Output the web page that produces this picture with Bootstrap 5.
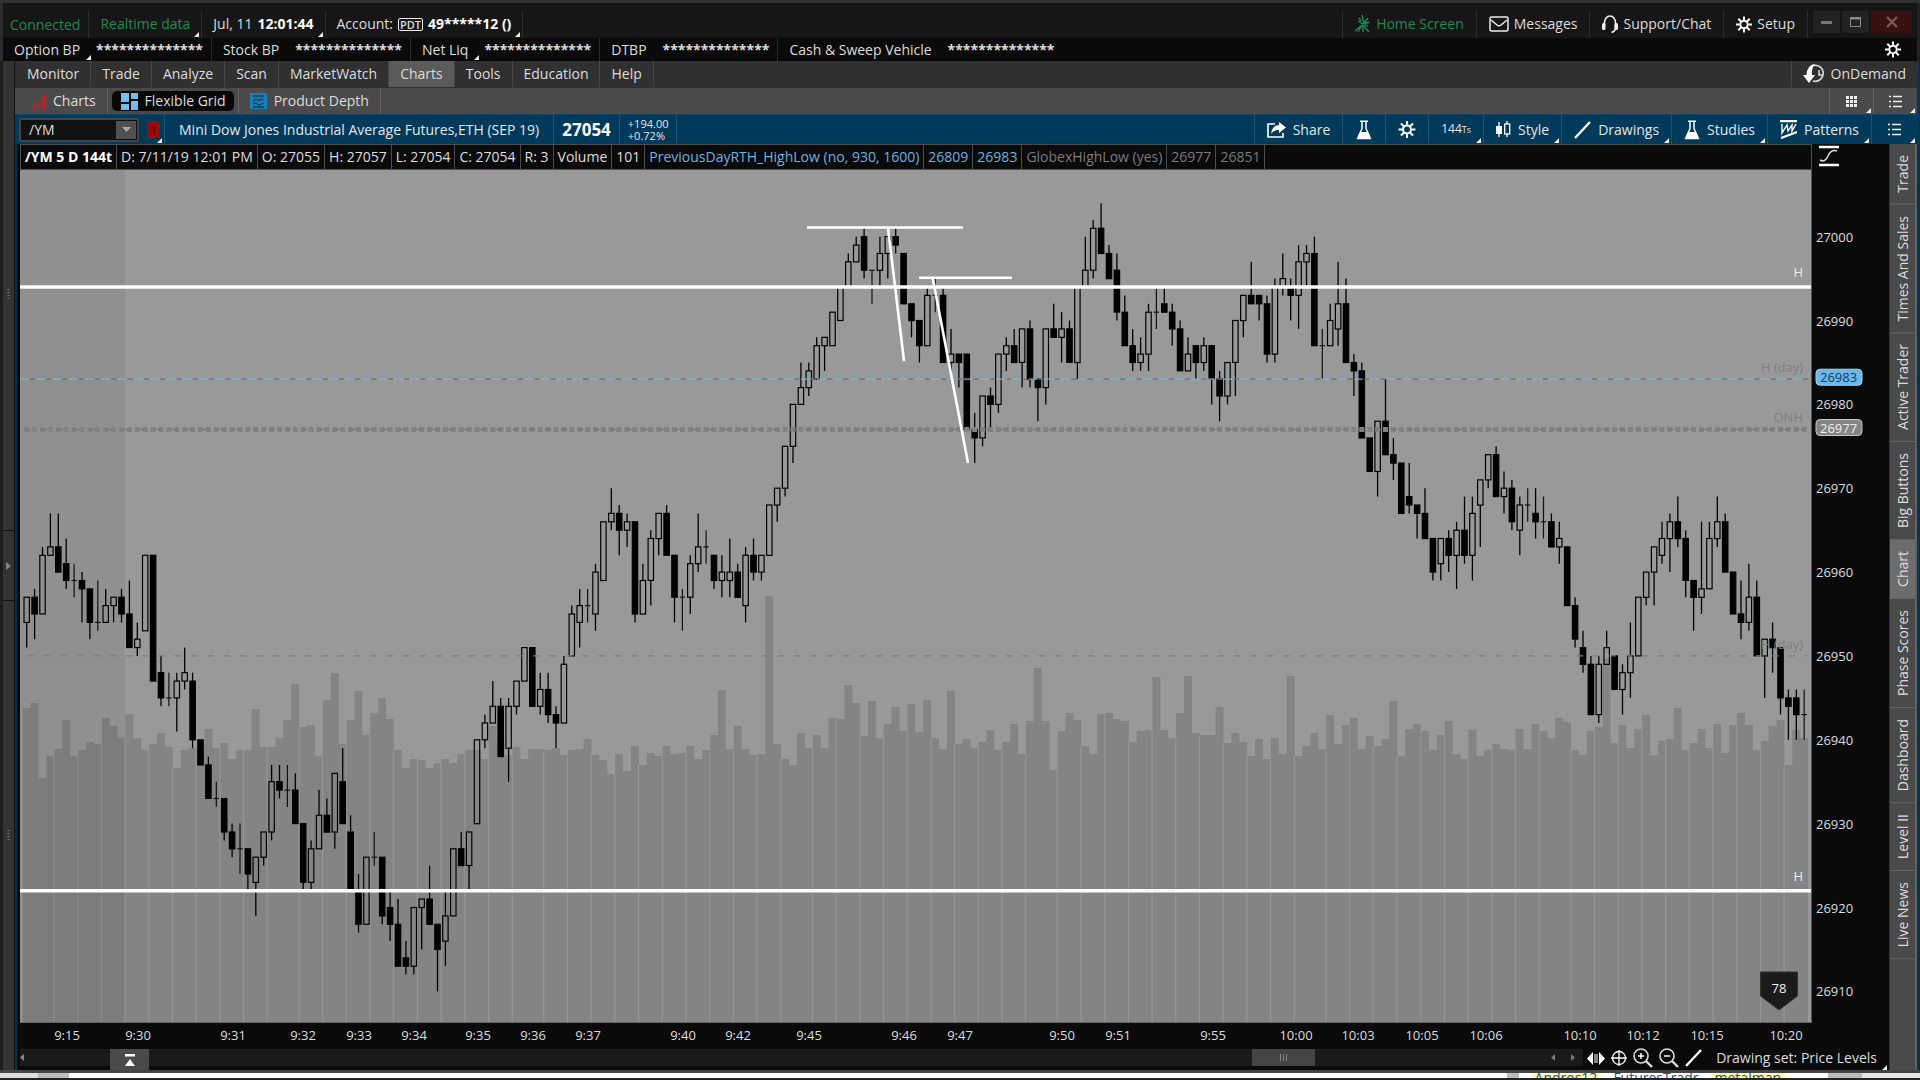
<!DOCTYPE html>
<html lang="en">
<head>
<meta charset="utf-8">
<meta name="viewport" content="width=device-width, initial-scale=1">
<title>Charts - Flexible Grid</title>
<link href="https://cdn.jsdelivr.net/npm/bootstrap@5.3.0/dist/css/bootstrap.min.css" rel="stylesheet">
<style>
body{font-family:"Open Sans","Noto Sans",sans-serif;font-size:14px;line-height:16px;color:#ddd;background:#0a0a0a;overflow:hidden}
a,button{color:inherit;text-decoration:none;font:inherit}
button{background:none;border:0;padding:0}
svg{display:block;flex:none}
.frame-top{height:3px;background:#333}
.title-row{height:35px;background:#161616;border-left:3px solid #2c2c2c;border-right:3px solid #222;padding-top:8px}
.bal-row{height:23px;background:#0a0a0a;border-left:3px solid #2c2c2c;border-right:3px solid #222}
.seg{display:flex;align-items:center;gap:7px;padding:0 11px;border-right:1px solid #2b2b2b;position:relative;white-space:nowrap;height:100%}
.title-row .seg{padding-bottom:1px;gap:5px}
.title-row .seg.first{padding:0 8px 0 7px}
.title-row button.seg{padding-left:12px;padding-right:12px}
.bal-row .seg{gap:5px;padding-right:8px}
.grn{color:#1f8a55}
.corner::after{content:"";position:absolute;right:2px;bottom:1px;border-style:solid;border-width:0 0 5px 5px;border-color:transparent transparent #eee transparent}
.bal-name{position:relative;height:100%;display:flex;align-items:center;padding-right:11px}
.bal-name.corner::after{right:0}
.pdt{border:1px solid #eee;border-radius:2px;font-size:11px;line-height:11px;padding:0 1px;font-weight:600}
.stars{font-weight:700;font-size:14px}
.wins{gap:2px;padding:0 5px}
.win{width:27px;height:22px;background:#222;display:flex;align-items:center;justify-content:center}
.win-x{width:41px;background:#3a1112}
.fill-pane,.shrink-pane{min-width:0;min-height:0}
.rail{width:15px;background:#333;border-left:3px solid #1c1c1c;border-right:1px solid #111}
.rail-end{flex:47 0 0}
.rail-mid{flex:7 0 0;border-top:1px solid #111;border-bottom:1px solid #111}
.menu-row{height:27px;background:#303030;padding-left:1px}
.menu-row .seg{border-color:#464646;height:26px}
.menu-row .on{background:#5a5a5a}
.tab-row{height:26px;background:#4a4a4a}
.tab-row .seg{border-color:#626262}
.pill-on{background:#070707;border-radius:5px;height:20px;display:flex;align-items:center;gap:7px;padding:0 8px 0 9px}
.blue-row{height:30px;background:#003a5a;border-top:1px solid #0b4568;color:#e6e6e6}
.blue-row .seg{border-color:#1c5272;padding:0 12px}
.blue-row .seg.sym-seg{padding:0 4px;gap:0}
.blue-row .seg.name-seg{padding:0 14px}
.blue-row .seg.tight{padding:0 8px}
.sym{width:120px;height:24px;background:#111;border:2px solid #444;border-radius:2px}
.sym input{width:94px;background:transparent;border:0;color:#ddd;padding:0 8px;outline:0;font:inherit}
.sym button{width:22px;background:#505050;margin:1px;display:flex;align-items:center;justify-content:center}
.red1{width:13px;height:17px;background:#9a0c0c;color:#3c0000;border-radius:3px;font-size:13px;display:flex;justify-content:center;align-items:center}
.last{font-size:17px;font-weight:700;color:#fff}
.chg{font-size:11px;line-height:12px}
.ticks{font-size:12px}
.ticks small{font-size:9px}
.info-row{height:26px;border:1px solid #4d4d4d;background:#0a0a0a;margin-left:3px}
.info-row span{border-right:1px solid #4d4d4d;padding:0 4px;display:flex;align-items:center;white-space:nowrap}
.cy{color:#6cb2e2}.gy{color:#7b7b7b}
.work{border-left:2px solid #00324e;background:#0a0a0a}
.plot{background:#999;margin-left:3px;border-right:1px solid #555;border-bottom:1px solid #666}
.axis-y{width:77px}
.axis-x{height:26px}
.axis-y svg,.axis-x svg,.plot svg{position:absolute;left:0;top:0;width:100%;height:100%;overflow:hidden}
.plot text{font-size:13px;fill:#808080}
.axis-y text,.axis-x text{font-size:13px;fill:#ddd}
.side{width:28px;background:#4a4a4a;border-left:1px solid #333;border-right:2px solid #626262}
.side button{writing-mode:vertical-rl;transform:rotate(180deg);padding:11px 0;width:100%;line-height:25px;border-top:1px solid #666;color:#ddd}
.side .on{background:#6c6c6c}
.edge{width:3px;background:#222;border-left:2px solid #003a5a}
.scroll-row{height:21px}
.track{height:17px;background:#1a1a1a;margin-left:3px}
.track-end{width:268px}
.knob{width:39px;height:22px;background:#4a4a4a;margin-left:86px}
.thumb{width:63px;height:17px;background:#444}
.tools{height:18px;gap:6px;padding:0 12px 0 4px}
.tools.corner::after{bottom:-3px}
.frame-bot{height:3px;background:#444}
.under{height:7px;overflow:hidden;background:linear-gradient(90deg,#ddd 2%,#bbb 2% 3.6%,#fff 3.6% 78.5%,#bbb 78.5% 79.1%,#fff 79.1% 95.2%,#bbb 95.2% 97%,#e4e4e4 97%);color:#1b4f8f;border-bottom:2px solid #222;line-height:10px;padding-right:135px}
.under mark{padding:0 4px;background:#ffffae;color:inherit}
</style>
</head>
<body class="vh-100 d-flex flex-column">
<svg width="0" height="0" class="position-absolute">
<defs>
<symbol id="gear" viewBox="0 0 18 18"><g stroke="#fff" stroke-width="2.2" fill="none"><circle cx="9" cy="9" r="4.2"/><path d="M9 0v4M9 14v4M0 9h4M14 9h4M2.6 2.6l3 3M12.4 12.4l3 3M15.4 2.6l-3 3M5.6 12.4l-3 3"/></g></symbol>
<symbol id="flask" viewBox="0 0 16 20"><path d="M4 1.200h8M6 1.500v7L1.600 18.600h12.800L10 8.500v-7" fill="none" stroke="#fff" stroke-width="1.500"/><path d="M4.500 12h7l3 6.800h-13z" fill="#fff"/></symbol>
<symbol id="list" viewBox="0 0 13 13"><path d="M0 1.500h2M4 1.500h9M0 6.500h2M4 6.500h9M0 11.500h2M4 11.500h9" stroke="#eee" stroke-width="1.4"/></symbol>
<symbol id="slash" viewBox="0 0 17 18"><path d="M1 17L16 1" stroke="#fff" stroke-width="2.4"/></symbol>
</defs>
</svg>

<div class="frame-top flex-shrink-0"></div>
<header class="title-row d-flex flex-shrink-0">
  <div class="seg first grn">Connected</div>
  <div class="seg corner grn">Realtime data</div>
  <div class="seg corner"><span>Jul, 11</span><b class="text-white">12:01:44</b></div>
  <div class="seg corner"><span>Account:</span><span class="pdt">PDT</span><b class="text-white">49*****12 ()</b></div>
  <div class="flex-grow-1"></div>
  <div class="seg p-0"></div>
  <button class="seg grn"><svg width="16" height="18" viewBox="0 0 16 18"><path d="M9 9L7 0M8 9l5-6M9 9l5-2M9 11l5 6M10 10l3 1M8 9L3 6M8 9v8M7 10l-4 7M6 11l-6 5M6 6L4 3" stroke="#1f8a55" stroke-width="1.400" fill="none"/></svg>Home Screen</button>
  <button class="seg"><svg width="20" height="16" viewBox="0 0 20 16"><rect x="1" y="1" width="18" height="14" rx="1.500" fill="none" stroke="#eee" stroke-width="1.500"/><path d="M2 4l6 5q2 1.500 4 0l6-5" fill="none" stroke="#eee" stroke-width="1.500"/></svg>Messages</button>
  <button class="seg"><svg width="16" height="19" viewBox="0 0 16 19"><path d="M2.500 11V7.500a5.500 6.500 0 0 1 11 0V12q0 4.500-4 5.500" fill="none" stroke="#eee" stroke-width="1.600"/><rect x="0" y="8" width="3.500" height="7" rx="1.500" fill="#eee"/><rect x="12.500" y="8" width="3.500" height="7" rx="1.500" fill="#eee"/></svg>Support/Chat</button>
  <button class="seg"><svg width="16" height="17"><use href="#gear"/></svg>Setup</button>
  <div class="wins d-flex">
    <button class="win" aria-label="Minimize"><svg width="11" height="3"><rect width="11" height="3" fill="#777"/></svg></button>
    <button class="win" aria-label="Maximize"><svg width="11" height="10"><rect x=".5" y=".5" width="10" height="9" fill="none" stroke="#888"/><path d="M0 1.500h11" stroke="#888" stroke-width="2"/></svg></button>
    <button class="win win-x" aria-label="Close"><svg width="12" height="12"><path d="M1 1l10 10M11 1L1 11" stroke="#7e5555" stroke-width="2.400"/></svg></button>
  </div>
</header>
<div class="bal-row d-flex flex-shrink-0">
  <div class="seg"><span class="bal-name corner">Option BP</span><span class="stars">**************</span></div>
  <div class="seg"><span class="bal-name">Stock BP</span><span class="stars">**************</span></div>
  <div class="seg"><span class="bal-name corner">Net Liq</span><span class="stars">**************</span></div>
  <div class="seg"><span class="bal-name">DTBP</span><span class="stars">**************</span></div>
  <div class="seg border-0"><span class="bal-name">Cash &amp; Sweep Vehicle</span><span class="stars">**************</span></div>
  <button class="ms-auto me-3 d-flex align-items-center" aria-label="Settings"><svg width="16" height="17"><use href="#gear"/></svg></button>
</div>

<div class="d-flex flex-grow-1 fill-pane">
  <aside class="rail d-flex flex-column flex-shrink-0">
    <div class="rail-end d-flex align-items-center justify-content-center"><svg width="3" height="12"><path d="M1.500 0v12" stroke="#777" stroke-width="2" stroke-dasharray="1 2"/></svg></div>
    <div class="rail-mid d-flex align-items-center justify-content-center"><svg width="5" height="8"><path d="M0 0l5 4-5 4z" fill="#888"/></svg></div>
    <div class="rail-end d-flex align-items-center justify-content-center"><svg width="3" height="12"><path d="M1.500 0v12" stroke="#777" stroke-width="2" stroke-dasharray="1 2"/></svg></div>
  </aside>
  <div class="d-flex flex-column flex-grow-1 fill-pane">
    <nav class="menu-row d-flex flex-shrink-0">
      <a class="seg" href="#">Monitor</a><a class="seg" href="#">Trade</a><a class="seg" href="#">Analyze</a><a class="seg" href="#">Scan</a><a class="seg" href="#">MarketWatch</a><a class="seg on" href="#">Charts</a><a class="seg" href="#">Tools</a><a class="seg" href="#">Education</a><a class="seg" href="#">Help</a>
      <div class="seg ms-auto p-0"></div>
      <button class="seg border-0 gap-1"><svg width="24" height="20" viewBox="0 0 24 20"><path d="M8 2.500a8 8 0 1 1 2 14.500" fill="none" stroke="#ddd" stroke-width="1.600"/><path d="M16 6v5h4" fill="none" stroke="#ddd" stroke-width="1.500"/><path d="M12 0Q4 1 3.500 11H0l6 8 6-8H9Q8 5 12 0z" fill="#fff"/></svg>OnDemand</button>
    </nav>
    <nav class="tab-row d-flex flex-shrink-0">
      <a class="seg" href="#"><svg width="20" height="17"><path d="M5.500 17v-3M9 17v-7M12.500 17V7M16 17V3M19 17V0" stroke="#b32424" stroke-width="2"/></svg>Charts</a>
      <a class="seg px-1" href="#"><span class="pill-on"><svg width="17" height="17" viewBox="0 0 17 17"><path d="M0 0h8v9H0zM0 11h8v6H0zM10 0h7v6h-7zM10 8h7v9h-7z" fill="#72bdf0"/></svg>Flexible Grid</span></a>
      <a class="seg" href="#"><svg width="17" height="16"><rect width="17" height="16" fill="#1a7fb8"/><path d="M3 3h11M3 8l3-2 3 2 2-2 3 1M3 11l3-1 3 2 5-2M3 14h11" stroke="#0d3f5e" stroke-width="1.300" fill="none"/></svg>Product Depth</a>
      <div class="seg ms-auto p-0"></div>
      <button class="seg corner px-3" aria-label="Grid layout"><svg width="11" height="11"><path d="M0 1.500h11M0 5.500h11M0 9.500h11" stroke="#eee" stroke-width="3" stroke-dasharray="3 1"/></svg></button>
      <button class="seg corner border-0" aria-label="List"><svg width="13" height="13" class="mx-1"><use href="#list"/></svg></button>
    </nav>
    <div class="blue-row d-flex flex-shrink-0">
      <div class="seg corner sym-seg"><div class="sym d-flex"><input aria-label="Symbol" value="/YM"><button aria-label="Symbols"><svg width="9" height="5"><path d="M0 0h9L4.500 5z" fill="#aaa"/></svg></button></div><span class="red1 ms-2">1</span></div>
      <div class="seg name-seg">Mini Dow Jones Industrial Average Futures,ETH (SEP 19)</div>
      <div class="seg tight last">27054</div>
      <div class="seg tight chg"><div><div>+194.00</div><div>+0.72%</div></div></div>
      <div class="seg tight ms-auto px-0"></div>
      <button class="seg"><svg width="19" height="16" viewBox="0 0 19 16"><path d="M8 2H1v13h15v-4" fill="none" stroke="#fff" stroke-width="1.600"/><path d="M12 0l7 5.500-7 5.500V8Q7 7.500 4 12 5 3.500 12 3z" fill="#fff"/></svg>Share</button>
      <button class="seg" aria-label="Studies quick"><svg width="18" height="20"><use href="#flask"/></svg></button>
      <button class="seg" aria-label="Chart settings"><svg width="18" height="17"><use href="#gear"/></svg></button>
      <button class="seg corner ticks"><span>144<small>Ts</small></span></button>
      <button class="seg corner"><svg width="15" height="17" viewBox="0 0 15 17"><path d="M3 1v15M11 0v3M11 13v3" stroke="#fff" stroke-width="1.300"/><rect x="0" y="5" width="6" height="8" fill="#fff"/><rect x="8.700" y="3" width="5" height="10" fill="none" stroke="#fff" stroke-width="1.300"/></svg>Style</button>
      <button class="seg corner"><svg width="17" height="18"><use href="#slash"/></svg>Drawings</button>
      <button class="seg corner"><svg width="16" height="20"><use href="#flask"/></svg>Studies</button>
      <button class="seg corner"><svg width="17" height="19" viewBox="0 0 17 19"><path d="M0 1.200h17M1 18L17 12" stroke="#fff" stroke-width="2.200"/><path d="M2 4v9l5-8 1 6 4-6v6l4-7" fill="none" stroke="#fff" stroke-width="1.400"/></svg>Patterns</button>
      <button class="seg corner border-0" aria-label="Chart list"><svg width="13" height="13" class="mx-1"><use href="#list"/></svg></button>
    </div>
    <div class="d-flex flex-grow-1 fill-pane">
      <main class="work d-flex flex-column flex-grow-1 fill-pane">
        <div class="d-flex flex-grow-1 fill-pane">
          <div class="d-flex flex-column flex-grow-1 fill-pane">
            <div class="info-row d-flex text-nowrap flex-shrink-0">
              <span class="fw-bold text-white">/YM 5 D 144t</span><span>D: 7/11/19 12:01 PM</span><span>O: 27055</span><span>H: 27057</span><span>L: 27054</span><span>C: 27054</span><span>R: 3</span><span>Volume</span><span>101</span><span class="cy">PreviousDayRTH_HighLow (no, 930, 1600)</span><span class="cy">26809</span><span class="cy">26983</span><span class="gy">GlobexHighLow (yes)</span><span class="gy">26977</span><span class="gy">26851</span>
            </div>
            <div class="plot position-relative flex-grow-1"><svg id="plot" role="img" aria-label="Candlestick chart of /YM"></svg></div>
          </div>
          <div class="axis-y position-relative flex-shrink-0"><svg id="axisY"></svg></div>
        </div>
        <div class="axis-x position-relative flex-shrink-0"><svg id="axisX"></svg></div>
        <div class="scroll-row d-flex flex-shrink-0">
          <div class="track d-flex flex-grow-1">
            <svg width="4" height="17"><path d="M4 5L0 8.500 4 12z" fill="#888"/></svg>
            <button class="knob d-flex align-items-center justify-content-center" aria-label="Expand panel"><svg width="10" height="12"><path d="M5 5l5 7H0z" fill="#fff"/><rect width="10" height="2.500" fill="#fff"/></svg></button>
            <div class="flex-grow-1"></div>
            <div class="thumb d-flex align-items-center justify-content-center"><svg width="7" height="7"><path d="M.5 0v7M3.500 0v7M6.500 0v7" stroke="#888"/></svg></div>
            <div class="track-end d-flex justify-content-end gap-3 pe-2"><svg width="4" height="17"><path d="M4 5L0 8.500 4 12z" fill="#777"/></svg><svg width="4" height="17"><path d="M0 5l4 3.500L0 12z" fill="#777"/></svg></div>
          </div>
          <div class="tools d-flex align-items-center position-relative corner text-nowrap">
            <svg width="18" height="13"><path d="M6 0v13L0 6.500zM12 0v13l6-6.500z" fill="#fff"/><path d="M8 2v9M10 2v9" stroke="#fff"/></svg>
            <svg width="16" height="18"><circle cx="8" cy="9" r="6.500" fill="none" stroke="#fff" stroke-width="1.300"/><path d="M8 1v16M0 9h16" stroke="#fff" stroke-width="1.300"/></svg>
            <svg width="20" height="20"><circle cx="8" cy="8" r="7" fill="none" stroke="#ddd" stroke-width="1.600"/><path d="M8 5v6M5 8h6" stroke="#fff" stroke-width="1.500"/><path d="M13 13l6 6" stroke="#ddd" stroke-width="2.400"/></svg>
            <svg width="20" height="20"><circle cx="8" cy="8" r="7" fill="none" stroke="#ddd" stroke-width="1.600"/><path d="M5 8h6" stroke="#fff" stroke-width="1.500"/><path d="M13 13l6 6" stroke="#ddd" stroke-width="2.400"/></svg>
            <svg width="17" height="18"><use href="#slash"/></svg>
            <button class="ms-2">Drawing set: Price Levels</button>
          </div>
        </div>
      </main>
      <aside class="side d-flex flex-column flex-shrink-0">
        <button>Trade</button><button>Times And Sales</button><button>Active Trader</button><button>Big Buttons</button><button class="on">Chart</button><button>Phase Scores</button><button>Dashboard</button><button>Level II</button><button>Live News</button>
      </aside>
    </div>
  </div>
  <div class="edge flex-shrink-0"></div>
</div>
<div class="frame-bot flex-shrink-0"></div>
<div class="under flex-shrink-0 d-flex justify-content-end gap-2"><mark>Andros12</mark><span class="px-1">FuturesTradr</span><mark>metalman</mark></div>

<script src="https://cdn.jsdelivr.net/npm/bootstrap@5.3.0/dist/js/bootstrap.bundle.min.js"></script>
<script>
// Candles as high,top,bottom,low above 26900; o = hollow, f = filled, d = doji
const C = `57,57,54,51o 58,57,55,52f 63,62,55,55o 67,63,62,62o 67,63,60,60f 64,61,59,58f 61,59,59,57d 60,59,58,54f 58,58,54,52f 59,54,54,53d
58,56,54,54o 57,57,56,54o 58,57,55,54f 59,55,51,51f 54,52,51,50o 62,62,53,53o 62,62,47,47f 50,48,45,44f 48,45,45,44d 48,47,45,41o
51,48,47,46o 48,47,40,39f 40,40,37,37f 38,37,33,33f 35,33,33,32d 33,33,29,28f 30,29,27,26f 30,27,27,24d 27,27,24,22f 26,26,23,19o
29,29,26,25o 37,35,29,28o 37,35,34,33f 37,34,34,32d 36,34,30,30f 30,30,23,22f 28,27,23,22o 34,31,27,27o 33,31,29,29f 36,36,29,27o
39,35,30,30f 31,29,22,22f 24,22,18,17f 26,26,18,18o 29,26,26,25d 26,26,19,18f 22,20,18,16f 21,18,13,13f 16,14,13,12f 20,20,13,12o
21,21,20,15o 25,21,18,18f 18,18,15,10f 22,19,16,13o 27,27,19,19o 29,27,25,25f 29,29,25,22o 40,40,30,30o 43,42,40,39o 47,44,42,42o
45,44,38,38f 45,44,39,35o 47,47,44,43o 51,51,47,47o 51,51,44,44f 48,46,44,43o 48,46,43,42f 44,43,42,39f 50,49,42,42o 56,55,50,50o
58,56,54,51o 58,56,56,54d 61,60,55,53o 66,66,59,59o 70,67,66,65o 68,67,65,62f 67,66,65,63o 66,66,55,54f 61,59,55,55o 65,64,59,56o
67,67,64,62o 68,67,62,62f 62,62,57,54f 58,57,57,53d 62,61,57,55o 67,63,61,60o 65,63,63,61d 62,62,59,58f 62,60,59,57o 64,60,59,57o
61,60,57,57f 63,62,56,54o 64,62,60,59f 62,62,60,59o 68,68,62,62o 70,70,68,66o 75,75,70,69o 80,80,75,73o 85,82,80,80o 85,84,82,81o
88,87,83,83o 88,88,87,84o 91,91,87,87o 94,94,90,90o 98,97,94,94o 100,99,97,97o 101,100,96,95f 96,96,96,92d 100,98,96,94o 100,100,98,95o
101,100,99,98f 98,98,92,92f 92,92,90,88f 90,90,87,85f 94,93,87,87o 95,93,93,91d 94,93,85,85f 89,86,85,84o 86,86,85,82f 86,86,77,77f
79,77,76,73f 81,81,76,75o 82,81,80,77f 86,86,80,79o 88,87,86,84o 89,87,85,85f 89,89,85,82o 90,89,83,82f 83,83,82,78f 89,89,82,80o
92,89,88,88f 91,89,88,85o 90,89,85,85f 94,94,85,83o 100,96,94,94o 102,101,96,95o 104,101,98,98f 99,98,95,95f 98,96,91,90f 93,91,87,87f
89,87,85,84f 88,86,85,84o 92,91,86,84o 94,91,91,89d 94,92,91,91f 92,91,89,87f 90,89,84,84f 88,86,84,84o 87,87,85,83f 88,87,85,84o
87,87,83,80f 84,83,81,78f 85,85,81,80o 90,90,85,81o 93,93,90,88o 97,93,92,92f 93,93,92,90f 93,92,86,85f 95,94,86,85o 98,95,94,93o
95,94,93,90f 99,97,93,89o 99,98,97,94o 100,98,87,87f 89,87,87,83d 92,90,87,87o 97,92,89,87o 95,92,85,85f 86,85,84,81f 85,84,76,76f
76,76,72,72f 78,78,72,69o 83,78,74,74f 76,74,73,71f 73,73,67,67f 73,69,68,67f 68,68,67,64f 70,67,64,64f 64,64,60,59f 64,64,61,59o
65,64,62,60f 66,65,62,58o 69,65,62,61f 69,67,62,59o 71,71,68,63o 74,74,71,70o 75,74,69,69f 72,70,69,67o 71,70,66,65f 69,68,65,62o
70,68,68,66d 70,67,66,64f 69,66,66,64d 67,66,63,63f 66,64,63,61o 63,63,56,56f 57,56,52,51f 53,51,49,48f 50,49,43,43f 50,49,43,42o
53,51,49,49o 50,50,46,46f 49,48,46,43o 54,50,48,45o 57,57,50,50o 60,60,57,56o 63,63,60,56o 66,64,62,61o 67,66,64,60o 69,66,64,63f
65,64,59,57f 59,59,57,53f 66,58,57,55o 66,64,58,58o 69,66,64,63o 67,66,60,60f 60,60,55,55f 59,55,54,52f 61,57,54,53o 59,57,50,50f
52,52,50,45o 54,52,51,48f 51,51,45,43f 46,45,44,40f 46,45,43,40f 46,43,43,40d`.split(/\s+/).map(s => [...s.slice(0, -1).split(',').map(Number), s.slice(-1)]);
// Top edge of each volume bar
const V = [708,703,778,756,749,720,756,750,742,744,718,726,738,714,738,750,744,733,747,768,750,748,748,729,748,743,759,750,750,709,
747,747,738,720,684,727,725,756,700,673,744,720,691,735,713,698,719,750,768,759,760,768,763,759,763,754,750,750,759,726,
742,755,747,759,749,749,750,748,755,750,749,739,755,760,774,754,771,746,765,753,756,746,754,753,746,759,750,735,690,749,
726,749,755,754,596,744,759,765,733,748,735,748,718,719,685,703,736,701,738,724,707,731,704,732,700,738,749,691,744,739,
748,742,730,750,742,724,754,721,668,721,770,731,713,720,746,754,714,713,719,721,742,731,730,677,730,738,713,676,733,735,
735,707,743,733,742,756,739,759,738,754,676,756,746,733,749,715,744,725,718,749,736,746,739,701,756,729,724,731,750,735,
721,754,759,730,756,750,744,749,750,729,749,724,731,738,718,722,750,755,731,727,659,743,725,748,729,715,755,741,739,708,
750,743,729,748,724,753,725,713,725,750,741,726,720,765,730,738];
const T = [[67,'9:15'],[138,'9:30'],[233,'9:31'],[303,'9:32'],[359,'9:33'],[414,'9:34'],[478,'9:35'],[533,'9:36'],[588,'9:37'],[683,'9:40'],[738,'9:42'],[809,'9:45'],[904,'9:46'],[960,'9:47'],[1062,'9:50'],[1118,'9:51'],[1213,'9:55'],[1296,'10:00'],[1358,'10:03'],[1422,'10:05'],[1486,'10:06'],[1580,'10:10'],[1643,'10:12'],[1707,'10:15'],[1786,'10:20']];
const LONG = [31, 62, 96, 127, 161, 192]; // groups of four bars start here, the others hold three

function draw() {
  const el = document.getElementById('plot'), W = el.clientWidth, H = el.clientHeight;
  const kx = W / 1791, ky = H / 852;
  const X = x => (x - 20) * kx, Y = y => (y - 170) * ky;
  const P = p => Y(287 + (94 - p) * 8.385), cx = i => X(26.7 + 7.9 * i), n = v => v.toFixed(1);
  const line = (x1, y1, x2, y2, s) => `<line x1="${n(x1)}" y1="${n(y1)}" x2="${n(x2)}" y2="${n(y2)}" ${s}/>`;
  let s = '', d = `M${n(X(22.7))} ${H}`;
  V.forEach((v, i) => { d += `V${n(Y(v))}H${n(X(22.7 + 7.9 * (i + 1)))}`; });
  s += `<path d="${d}V${H}z" fill="#848484"/>`;
  for (let i = 4; i < V.length; i += LONG.includes(i) ? 4 : 3)
    s += line(X(22.4 + 7.9 * i), Y(Math.max(V[i], V[i - 1])), X(22.4 + 7.9 * i), H, 'stroke="#959595" stroke-width="1.2"');
  s += `<rect width="${n(X(125))}" height="${H}" fill="#000" fill-opacity=".055"/>`;
  C.forEach(([h, t, b, l, k], i) => {
    const x = cx(i), w = 2.7 * kx;
    if (k === 'd') s += line(x, P(h), x, P(l), 'stroke="#111" stroke-width="1.2"') + line(x - w, P(t), x + w, P(t), 'stroke="#111" stroke-width="1.2"');
    else {
      s += line(x, P(h), x, P(t), 'stroke="#000" stroke-width="1.3"') + line(x, P(b), x, P(l), 'stroke="#000" stroke-width="1.3"');
      s += `<rect x="${n(x - w)}" y="${n(P(t))}" width="${n(2 * w)}" height="${n(P(b) - P(t))}" fill="${k === 'f' ? '#000' : 'none'}" stroke="#000" stroke-width="1.2"/>`;
    }
  });
  s += line(X(28), P(50), X(1807), P(50), 'stroke="#7e7e7e" stroke-width="1.2" stroke-dasharray="6.6 9.7"');
  s += line(0, P(83), W, P(83), 'stroke="#6cb8ec" stroke-width="1.2" stroke-dasharray="8.5 7.77"');
  s += line(10, P(83), W, P(83), 'stroke="#6f6f6f" stroke-width="1.2" stroke-dasharray="5 11.27"');
  s += line(X(24.2), P(77), X(1807), P(77), `stroke="#828282" stroke-width="5" stroke-dasharray="5 ${n(7.9 * kx - 5)}"`);
  s += line(X(24), P(77), X(1807), P(77), 'stroke="#777" stroke-width="1" stroke-dasharray="7 9.27"');
  [94, 22].forEach(p => { s += line(0, P(p), W, P(p), 'stroke="#fff" stroke-width="3.4"'); });
  [[807,227.5,963,227.5],[919,277.7,1012,277.7],[888,228,904,361],[932.7,278,968,463]].forEach(a => {
    s += line(X(a[0]), Y(a[1]), X(a[2]), Y(a[3]), 'stroke="#fff" stroke-width="2.6"'); });
  const label = (y, t, f) => `<text x="${n(X(1803))}" y="${n(Y(y))}" text-anchor="end" ${f || ''}>${t}</text>`;
  s += label(277, 'H', 'style="fill:#eee"') + label(881, 'H', 'style="fill:#eee"') + label(372, 'H (day)') + label(422, 'ONH') + label(649, 'H (day)');
  const bx = X(1779), by = Y(972);
  s += `<path d="M${bx - 18.500} ${by}h37v24l-18.500 14-18.500-14z" fill="#1b1b1b" stroke="#333"/><text x="${bx}" y="${by + 21}" text-anchor="middle" style="fill:#eee">78</text>`;
  el.innerHTML = s;

  const top = 26; // header strip above the plot
  let a = '<path d="M7 3h20M7 21h20" stroke="#fff" stroke-width="2.4"/><path d="M8 16q5 3 8-4t9-5" fill="none" stroke="#ddd" stroke-width="1.5"/>';
  for (let p = 100; p >= 10; p -= 10) a += `<text x="4" y="${n(P(p) + top + 5)}">${26900 + p}</text>`;
  [[83, '#6cb8ec', '#9fd4f7', '#123a56'], [77, '#858585', '#c8c8c8', '#eee']].forEach(([p, f, st, c]) => {
    const y = P(p) + top - 2;
    a += `<rect x="4" y="${n(y - 8)}" width="46" height="16" rx="4" fill="${f}" stroke="${st}"/><text x="8" y="${n(y + 5)}" style="fill:${c}">${26900 + p}</text>`;
  });
  document.getElementById('axisY').innerHTML = a;
  document.getElementById('axisX').innerHTML = T.map(([x, t]) => `<text x="${n(X(x) + 3)}" y="17" text-anchor="middle">${t}</text>`).join('');
}
draw();
addEventListener('resize', draw);
</script>
</body>
</html>
